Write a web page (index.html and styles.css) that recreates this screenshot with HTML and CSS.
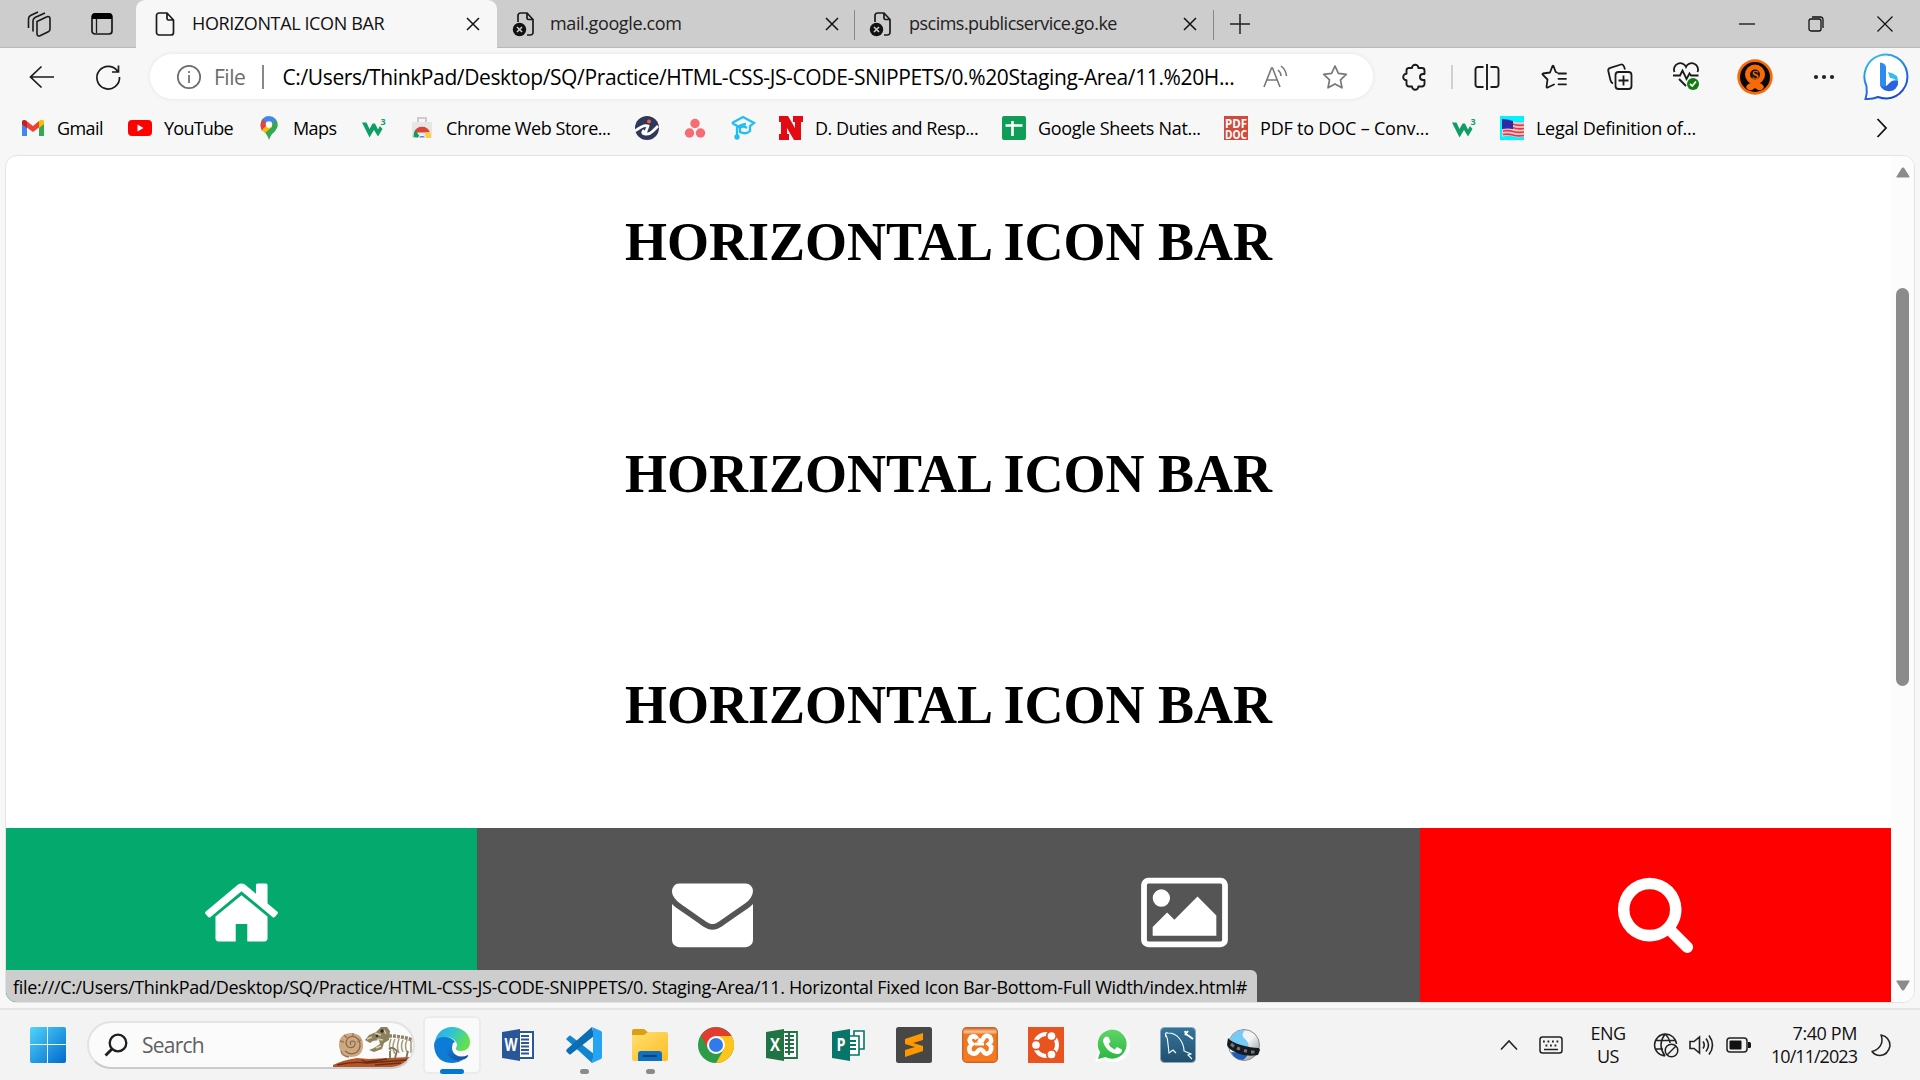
FILE: index.html
```html
<!DOCTYPE html>
<html lang="en">
<head>
<meta charset="utf-8">
<title>HORIZONTAL ICON BAR</title>
<link rel="stylesheet" href="styles.css">
</head>
<body>
<svg class="defs" width="0" height="0" aria-hidden="true">
  <defs>
    <linearGradient id="win" x1="0" y1="0" x2="1" y2="1"><stop offset="0" stop-color="#4fd5fb"/><stop offset="1" stop-color="#0069cd"/></linearGradient>
    <linearGradient id="edgeTop" x1="0" y1="0" x2="1" y2=".4"><stop offset="0" stop-color="#2fa8ee"/><stop offset=".5" stop-color="#2fc4d3"/><stop offset="1" stop-color="#62e14d"/></linearGradient>
    <linearGradient id="edgeLow" x1="0" y1="0" x2="1" y2="1"><stop offset="0" stop-color="#1283e0"/><stop offset="1" stop-color="#0c4a97"/></linearGradient>
    <linearGradient id="bing" x1="0" y1="0" x2=".5" y2="1"><stop offset="0" stop-color="#35c8f3"/><stop offset="1" stop-color="#1c49d6"/></linearGradient>
    <linearGradient id="folder" x1="0" y1="0" x2="1" y2="1"><stop offset="0" stop-color="#ffdf70"/><stop offset="1" stop-color="#fbbd24"/></linearGradient>
    <linearGradient id="xampp" x1="0" y1="0" x2="0" y2="1"><stop offset="0" stop-color="#d9641a"/><stop offset=".12" stop-color="#f8c39a"/><stop offset=".2" stop-color="#ee7420"/><stop offset="1" stop-color="#f97a1f"/></linearGradient>
    <linearGradient id="sql" x1="0" y1="0" x2="0" y2="1"><stop offset="0" stop-color="#35759b"/><stop offset="1" stop-color="#214f6e"/></linearGradient>
    <linearGradient id="wa" x1="0" y1="0" x2="0" y2="1"><stop offset="0" stop-color="#5fd568"/><stop offset="1" stop-color="#2cb742"/></linearGradient>
    <linearGradient id="silver" x1="0" y1="0" x2="1" y2="1"><stop offset="0" stop-color="#e8eef2"/><stop offset=".5" stop-color="#f4f4f4"/><stop offset="1" stop-color="#85898d"/></linearGradient>
    <symbol id="close" viewBox="0 0 14 14"><path d="M1 1l12 12M13 1L1 13" stroke="#111" stroke-width="1.5" fill="none"/></symbol>
    <symbol id="badpage" viewBox="0 0 24 26"><path d="M6 11V4.500a2.500 2.500 0 0 1 2.500-2.500H15l6 6.500V21.500a2.500 2.500 0 0 1-2.500 2.500H15M15 2v5a1.500 1.500 0 0 0 1.500 1.500H21" fill="none" stroke="#1a1a1a" stroke-width="1.700"/><circle cx="7.500" cy="18.500" r="6.700" fill="#111"/><path d="M5 16l5 5m0-5l-5 5" stroke="#ccc" stroke-width="1.600"/></symbol>
    <symbol id="w3" viewBox="0 0 24 24"><path d="M0 6.500h4.500L7.500 13l3-5.500h2.500l3 6 2-3.500 2.500 3-4.500 7.500L12 14l-4.500 7.500z" fill="#109d6a"/><text x="18.500" y="8.500" class="w3-digit">3</text></symbol>
  </defs>
</svg>

<header class="tabs">
  <div class="tabs-tools">
    <svg width="26" height="26" viewBox="0 0 26 26" fill="none" stroke="#1a1a1a" stroke-width="1.600"><path d="M11 10.500l10-4.700a2 2 0 0 1 3 1.700v10.500a3 3 0 0 1-1.700 2.700l-8.300 4a2 2 0 0 1-3-1.700zM7 20.500V10a4 4 0 0 1 2-3.500L19 2M2.500 17V8a4 4 0 0 1 2-3.500L12 1"/></svg>
    <svg width="22" height="24" viewBox="0 0 22 24"><rect x="1" y="2" width="20" height="20" rx="3" fill="none" stroke="#1a1a1a" stroke-width="1.700"/><path d="M1 7V4a3 3 0 0 1 3-3h14a3 3 0 0 1 3 3v3z" fill="#000"/><path d="M5.500 7v14" stroke="#1a1a1a" stroke-width="1.300"/></svg>
  </div>
  <div class="tab active">
    <svg width="20" height="26" viewBox="0 0 20 26" fill="none" stroke="#1a1a1a" stroke-width="1.700"><path d="M4 2h8l6.500 7v12.500A2.500 2.500 0 0 1 16 24H4a2.500 2.500 0 0 1-2.500-2.500v-17A2.500 2.500 0 0 1 4 2zM12 2v5.500A1.500 1.500 0 0 0 13.500 9h5"/></svg>
    <span class="tab-title">HORIZONTAL ICON BAR</span><svg width="14" height="14"><use href="#close"/></svg>
  </div>
  <div class="tab second">
    <svg width="24" height="26"><use href="#badpage"/></svg>
    <span class="tab-title">mail.google.com</span><svg width="14" height="14"><use href="#close"/></svg>
  </div>
  <div class="tab third">
    <svg width="24" height="26"><use href="#badpage"/></svg>
    <span class="tab-title">pscims.publicservice.go.ke</span><svg width="14" height="14"><use href="#close"/></svg>
  </div>
  <svg class="plus" width="22" height="22" viewBox="0 0 22 22"><path d="M11 1v20M1 11h20" stroke="#222" stroke-width="1.500"/></svg>
  <div class="window-buttons">
    <svg width="16" height="16" viewBox="0 0 16 16"><path d="M0 8h16" stroke="#111" stroke-width="1.300"/></svg>
    <svg width="16" height="16" viewBox="0 0 16 16" fill="none" stroke="#111" stroke-width="1.300"><rect x="1" y="3" width="12" height="12" rx="2"/><path d="M4 1h8.500A2.500 2.500 0 0 1 15 3.500V12"/></svg>
    <svg width="16" height="16" viewBox="0 0 16 16"><path d="M.5.500l15 15M15.500.500l-15 15" stroke="#111" stroke-width="1.200"/></svg>
  </div>
</header>

<nav class="toolbar">
  <svg width="26" height="24" viewBox="0 0 26 24" fill="none" stroke="#1a1a1a" stroke-width="1.700"><path d="M25 12H1.500M12.500 1.500L1.500 12l11 10.500"/></svg>
  <svg class="reload" width="26" height="26" viewBox="0 0 26 26" fill="none" stroke="#1a1a1a" stroke-width="1.700"><path d="M23 8A11.300 11.300 0 1 0 24.500 13M23.500 1.500V8H17"/></svg>
  <div class="address">
    <svg width="26" height="26" viewBox="0 0 26 26" fill="none" stroke="#6c6c6c" stroke-width="1.700"><circle cx="13" cy="13" r="11.200"/><path d="M13 11v8M13 7v2"/></svg>
    <span class="scheme">File</span><i class="bar"></i>
    <span class="url">C:/Users/ThinkPad/Desktop/SQ/Practice/HTML-CSS-JS-CODE-SNIPPETS/0.%20Staging-Area/11.%20H...</span>
    <svg class="aloud" width="26" height="24" viewBox="0 0 26 24" fill="none" stroke="#777" stroke-width="1.600"><path d="M1 22L8.500 3h1L17 22M4 15h10M15 5q3 2.500 3 6M18 1q5 4 5.500 10"/></svg>
    <svg class="star" width="26" height="26" viewBox="0 0 26 26" fill="none" stroke="#777" stroke-width="1.700" stroke-linejoin="round"><path d="M13 2l3.400 7.300 7.900 1-5.800 5.500 1.500 8-7-3.900-7 3.900 1.500-8L1.700 10.300l7.900-1z"/></svg>
  </div>
  <svg class="puzzle" width="26" height="28" viewBox="0 0 26 28" fill="none" stroke="#1a1a1a" stroke-width="1.900" stroke-linejoin="round"><path d="M6.500 5H10a3.200 3.200 0 0 1 6.400 0H20a2.500 2.500 0 0 1 2.500 2.500V11H21a3 3 0 0 0 0 6h1.500v4a2.500 2.500 0 0 1-2.500 2.500h-3.600a3.200 3.200 0 0 1-6.400 0H7A2.500 2.500 0 0 1 4.500 21v-3.700a3.300 3.300 0 0 1 0-6.600V7.500A2.500 2.500 0 0 1 6.500 5z"/></svg>
  <i class="sep"></i>
  <svg class="split" width="26" height="28" viewBox="0 0 26 28" fill="none" stroke="#1a1a1a" stroke-width="1.900"><path d="M13 1v26M9.500 4H4.500A2.500 2.500 0 0 0 1.500 6.500v15A2.500 2.500 0 0 0 4.500 24H9.500M16.500 4h5A2.500 2.500 0 0 1 24.500 6.500v15a2.500 2.500 0 0 1-3 2.500H16.500"/></svg>
  <svg class="favs" width="26" height="26" viewBox="0 0 26 26" fill="none" stroke="#1a1a1a" stroke-width="1.800" stroke-linejoin="round" stroke-linecap="round"><path d="M16 8.500l-1.300-.500L12.500 2q-.5-.7-1 0L9 8.500 2 9.500q-1 .5-.3 1.200L6.500 15.500 5.500 23q.3 1 1.200.5L13 20.500M17.500 9.500H25M17.500 14.800H25M17.500 20.300H25"/></svg>
  <svg class="collections" width="26" height="28" viewBox="0 0 26 28" fill="none" stroke="#1a1a1a" stroke-width="1.800"><path d="M6 20.500q-2-1-2.600-3.500L1.300 8q-.5-2.500 2-3.200L14 1.500q2-.5 3 2L18 6.500"/><rect x="8.500" y="9" width="16" height="17" rx="3"/><path d="M16.500 12.500v10M11.500 17.500h10"/></svg>
  <svg class="collections" width="26" height="29" viewBox="0 0 26 29" fill="none" stroke="#1a1a1a" stroke-width="1.800"><path d="M1.500 10A6 6 0 0 1 13 5 6 6 0 0 1 24.500 10M0 13.500h7l2.500-5 4 8.500 3-5.500 1.500 2h7.500M6 17l7 7"/><circle cx="20" cy="22" r="6" fill="#107c10" stroke="none"/><path d="M17 22l2.300 2 3.700-4.500" stroke="#fff"/></svg>
  <svg class="avatar" width="36" height="36" viewBox="0 0 36 36"><circle cx="18" cy="18" r="17.700" fill="#f76b07"/><circle cx="18" cy="18" r="15" fill="#080808"/><path d="M9 28q3-6 9-3 6-3 9 3-2 4-6 3l-3-2-3 2q-4 1-6-3z" fill="#f76b07"/><circle cx="18" cy="15.500" r="10" fill="#f76b07"/><circle cx="18" cy="15.500" r="5" fill="#141414"/><text x="14.900" y="20" class="avatar-letter">S</text></svg>
  <svg class="dots" width="22" height="6" viewBox="0 0 22 6" fill="#222"><circle cx="3" cy="3" r="2.100"/><circle cx="11" cy="3" r="2.100"/><circle cx="19" cy="3" r="2.100"/></svg>
  <svg class="bing" width="48" height="48" viewBox="0 0 48 48"><path d="M2.500 46q2-6 1-13A21.500 22 0 1 1 24 45.500q-5 0-9-1.500-6 2.500-12.500 2z" fill="#fff" stroke="url(#bing)" stroke-width="2"/><path d="M17 9.500q5 .5 6 4V37q-6-1-6-6z" fill="#2f8bf0"/><path d="M25 19q11 2 10 10-4-4-8-4z" fill="#30bdf0"/><path d="M35 28q1 6-5 9.500-9 3-13-6 4 5 9-1 4-5 9-2.500z" fill="#2a63e2"/></svg>
</nav>

<nav class="bookmarks">
  <div class="bm"><svg width="24" height="24" viewBox="0 0 24 24"><path d="M1 5v15h5v-9z" fill="#4285f4"/><path d="M23 5v15h-5v-9z" fill="#34a853"/><path d="M1 5q2-2 4.500 0L12 10l6-5v6.500L12 16 1 8z" fill="#ea4335"/><path d="M18 5q3-2.500 5 0v3l-5 4z" fill="#fbbc04"/><path d="M1 5.500v2.700l5 3.700V5.500q-3-3-5 0z" fill="#c5221f"/></svg><span class="tight">Gmail</span></div>
  <div class="bm"><svg width="24" height="24" viewBox="0 0 24 24"><rect y="4" width="24" height="16" rx="4" fill="#f00"/><path d="M9.500 8.500v7l6-3.500z" fill="#fff"/></svg><span class="tighter">YouTube</span></div>
  <div class="bm"><svg width="24" height="24" viewBox="0 0 24 24"><path d="M12 0a8.500 8.500 0 0 0-8.500 8.500q0 4 4.500 8L18.500 3A8.500 8.500 0 0 0 12 0z" fill="#4285f4"/><path d="M5.500 3L12 8.500 5 15Q2 9 5.500 3z" fill="#ea4335"/><path d="M18.500 3Q22 7 20 12q-2 4-5 6-2 3-3 6-1-4-4-7.500z" fill="#34a853"/><path d="M5 14l5-5 5 2-7 6z" fill="#fbbc04"/><path d="M8 2l11 1-5 6-6-1z" fill="#4285f4"/><circle cx="12" cy="8.500" r="3.200" fill="#fff"/></svg><span class="tight">Maps</span></div>
  <div class="bm"><svg width="24" height="24"><use href="#w3"/></svg></div>
  <div class="bm"><svg width="24" height="24" viewBox="0 0 24 24"><path d="M8 6V2h8v4" fill="none" stroke="#ccc" stroke-width="2"/><path d="M2 6h20v16H2z" fill="#e6e6e6"/><path d="M4 16.500a8.500 8.500 0 0 1 16 0h-8z" fill="#db4437"/><path d="M3.500 21q-.5-4 2-7l5 8z" fill="#0f9d58"/><path d="M14 22l2-6h4q2 3 .5 6z" fill="#ffcd40"/><path d="M8 22a4.300 4.300 0 0 1 8 0z" fill="#4285f4" stroke="#fff"/></svg><span class="medium">Chrome Web Store...</span></div>
  <div class="bm"><svg width="24" height="24" viewBox="0 0 24 24"><circle cx="12" cy="12" r="12" fill="#2f3858"/><path d="M0 15q9-7 13-5l-3 8q4 1 8-3l5-5M10 18q-4 0-1-4" fill="none" stroke="#fff" stroke-width="2.800"/><circle cx="14" cy="5.500" r="2" fill="#f35f42"/></svg></div>
  <div class="bm"><svg width="24" height="24" viewBox="0 0 24 24" fill="#f76c72"><circle cx="12" cy="7.500" r="4.700"/><circle cx="6.500" cy="17" r="4.700"/><circle cx="17.500" cy="17" r="4.700"/></svg></div>
  <div class="bm"><svg width="24" height="24" viewBox="0 0 24 24" fill="none" stroke="#22bdf2" stroke-width="2.300"><path d="M1 7l11-6 11 6-4 3v5q-4 4-10 1v-4q3-3 7 0M1 7l7 4M6 23V12q2-3 9-4"/><circle cx="6" cy="21" r="1.500"/></svg></div>
  <div class="bm"><svg width="24" height="24" viewBox="0 0 24 24" fill="#e30b13"><path d="M0 0h9l7 12V6h-2V0h10v6h-2v18h-7L8 12v6h2v6H0v-6h2V6H0z"/></svg><span class="medium">D. Duties and Resp...</span></div>
  <div class="bm"><svg width="24" height="24" viewBox="0 0 24 24"><rect width="24" height="24" rx="2" fill="#0f9d58"/><path d="M10.500 5v15M3.500 9.500h17" stroke="#fff" stroke-width="2.600"/></svg><span class="loose">Google Sheets Nat...</span></div>
  <div class="bm"><svg width="24" height="24" viewBox="0 0 24 24"><path fill="#d24a3c" d="M0 0h24v24H0z"/><text x="1" y="11.500" textLength="22" lengthAdjust="spacingAndGlyphs" class="pdf">PDF</text><text x="1" y="22.500" textLength="22" lengthAdjust="spacingAndGlyphs" class="pdf">DOC</text></svg><span class="loosest">PDF to DOC – Conv...</span></div>
  <div class="bm"><svg width="24" height="24"><use href="#w3"/></svg></div>
  <div class="bm"><svg width="24" height="24" viewBox="0 0 24 24"><path fill="#00f4ff" d="M0 0h24v24H0z"/><path d="M2 3q5 0 10 2t12 1v15q-6 1-11-.5T2 21z" fill="#f4c3c7"/><path d="M12 8q6 2 12 1M12 11.500q6 2 12 1M3 15q5-1 10 .5t11 .5M3 18.500q5-1 10 .5t11 .5" stroke="#df3946" stroke-width="1.700" fill="none"/><path d="M2 3q6 0 11 2v8q-5-1-11 0z" fill="#2a2ba8"/></svg><span class="loose">Legal Definition of...</span></div>
  <svg class="more" width="12" height="20" viewBox="0 0 12 20" fill="none" stroke="#111" stroke-width="1.800"><path d="M1.500 1l8.500 9-8.500 9"/></svg>
</nav>

<main class="viewport">
  <div class="page">
    <section class="headings"><h1>HORIZONTAL ICON BAR</h1><h1>HORIZONTAL ICON BAR</h1><h1>HORIZONTAL ICON BAR</h1></section>
    <div class="icon-bar">
      <a class="home"><svg width="81" height="81" viewBox="0 0 1792 1792"><path d="M1472 992v480q0 26-19 45t-45 19h-384v-384h-256v384h-384q-26 0-45-19t-19-45v-480q0-1 .5-3t.5-3l575-474 575 474q1 2 1 6zm223-69l-62 74q-8 9-21 11h-3q-13 0-21-7l-692-577-692 577q-12 8-24 7-13-2-21-11l-62-74q-8-10-7-23.500t11-21.500l719-599q32-26 76-26t76 26l244 204v-195q0-14 9-23t23-9h192q14 0 23 9t9 23v408l219 182q10 8 11 21.500t-7 23.500z"/></svg></a>
      <a><svg width="81" height="81" viewBox="0 0 1792 1792"><path d="M1792 710v794q0 66-47 113t-113 47h-1472q-66 0-113-47t-47-113v-794q44 49 101 87 362 246 497 345 57 42 92.500 65.500t94.500 48 110 24.500h2q51 0 110-24.500t94.500-48 92.500-65.500q170-123 498-345 57-39 100-87zm0-294q0 79-49 151t-122 123q-376 261-468 325-10 7-42.500 31t-54 38.500-52 32.500-57.500 27-50 9h-2q-23 0-50-9t-57.500-27-52-32.500-54-38.500-42.500-31q-91-64-262-182.500t-205-142.500q-62-42-117-115.500t-55-136.500q0-78 41.500-130t118.500-52h1472q65 0 112.500 47t47.500 113z"/></svg></a>
      <a><svg width="87" height="81" viewBox="0 0 1920 1792"><path d="M640 576a192 192 0 1 1-384 0 192 192 0 0 1 384 0zM1664 960v448H256v-192l320-320 160 160 512-512zm96-704H160q-13 0-22.500 9.500T128 288v1216q0 13 9.500 22.500t22.500 9.500h1600q13 0 22.500-9.500t9.500-22.500V288q0-13-9.500-22.500T1760 256zm160 32v1216q0 66-47 113t-113 47H160q-66 0-113-47T0 1504V288q0-66 47-113t113-47h1600q66 0 113 47t47 113z"/></svg></a>
      <a class="find"><svg width="81" height="81" viewBox="0 0 1792 1792"><path d="M1216 832q0-185-131.500-316.500t-316.500-131.500-316.500 131.500-131.500 316.500 131.500 316.500 316.500 131.500 316.500-131.500 131.500-316.500zm512 832q0 52-38 90t-90 38q-54 0-90-38l-343-342q-179 124-399 124-143 0-273.500-55.500t-225-150-150-225-55.500-273.500 55.500-273.500 150-225 225-150 273.500-55.500 273.500 55.500 225 150 150 225 55.500 273.500q0 220-124 399l343 343q37 37 37 90z"/></svg></a>
    </div>
  </div>
  <div class="scrollbar">
    <svg width="14" height="11" viewBox="0 0 14 11"><path d="M7 .5q1 0 1.500 1l5 8q.5 1-.5 1H1q-1 0-.5-1l5-8q.5-1 1.500-1z" fill="#8b8b8b"/></svg>
    <i class="thumb"></i>
    <svg width="14" height="11" viewBox="0 0 14 11"><path d="M7 10.500q1 0 1.500-1l5-8q.5-1-.5-1H1q-1 0-.5 1l5 8q.5 1 1.500 1z" fill="#8b8b8b"/></svg>
  </div>
  <div class="status"><span>file:///C:/Users/ThinkPad/Desktop/SQ/Practice/HTML-CSS-JS-CODE-SNIPPETS/0. Staging-Area/11. Horizontal Fixed Icon Bar-Bottom-Full Width/index.html#</span></div>
</main>

<footer class="taskbar">
  <svg width="36" height="36" viewBox="0 0 36 36" fill="url(#win)"><path d="M2 0h15v17H0V2a2 2 0 0 1 2-2zM18 0h16a2 2 0 0 1 2 2v15H18zM0 18h17v18H2a2 2 0 0 1-2-2zM18 18h18v16a2 2 0 0 1-2 2H18z"/></svg>
  <div class="search">
    <svg width="24" height="24" viewBox="0 0 24 24" fill="none" stroke="#1e1e1e" stroke-width="2.300"><circle cx="14" cy="10" r="8.300"/><path d="M8 16l-6.500 6.500" stroke-width="2.800"/></svg>
    <span class="search-text">Search</span>
    <svg class="fossils" width="82" height="44" viewBox="0 0 82 44">
      <path d="M2 42q10-5 24-7l12 1 40-2 4 2-6 8H2z" fill="#b4552a"/><path d="M6 42q16-4 30-2l40-3M30 37l6 2 20-3M44 42l26-2" stroke="#6e2c14" stroke-width="1.300" fill="none"/>
      <path d="M8 22q0-12 13-12 11 1 11 12 0 12-12 12-12-2-12-12z" fill="#cda982"/><path d="M20 22q-2-3 1-4 4 0 3 4-2 4-7 2-4-4 0-9 6-4 11 2 3 7-2 12-6 4-12-1" fill="none" stroke="#8b6645" stroke-width="1.200"/><path d="M10 28q1 5 8 6M9 18l4 1M13 12l3 3M22 10v4M30 17l-4 2" stroke="#9b7350" stroke-width="1.300" fill="none"/>
      <path d="M34 17l4-5 7-3 5-5h6l3 4-1 9-5 3-2 6-8 3-5-2 5-2 6-4-1-4-6 1-3 2z" fill="#8b8160"/><path d="M36 16l5-2m3-4l6 2m3-5l2 4m-9 5l6 1m-7 8l5-2" stroke="#d6cda3" stroke-width="1.500"/><circle cx="51" cy="8" r="1.700" fill="#2f2c1e"/><circle cx="46" cy="13" r="1.300" fill="#3a3626"/>
      <path d="M58 13q12 0 24 4" stroke="#8f8564" stroke-width="3.500" stroke-dasharray="3 1" fill="none"/><path d="M60 16q-3 8 0 12m4-12q-4 8 0 15m4-15q-3 8 0 14m4-13q-3 6 0 12m4-12q-3 6 0 12m4-11v12" stroke="#a39a78" stroke-width="1.500" fill="none"/><path d="M58 26q4-3 8 2l-2 7M59 28v9M77 28l-2 8" stroke="#7c7252" stroke-width="1.800" fill="none"/>
    </svg>
  </div>
  <div class="apps">
    <div class="app current"><svg width="36" height="36" viewBox="0 0 36 36"><path d="M1 16A17 17 0 0 1 18 0c10 0 18 7 18 15 0 6-4 9-9 9-4 0-6-1.500-5-3q2-3 0-6Q17 8 8 12q-5 2-7 6z" fill="url(#edgeTop)"/><path d="M0 18q1-8 10-8 8 0 11 5l-2 1q-8 3-4 11 5 7 14 6-5 3-10 3Q1 36 0 18z" fill="#0d7cd7"/><path d="M14 18q-4 12 7 15 5 1 10-1 4-3 3-4-7 3-12 0-6-4-3-12-3 0-5 2z" fill="url(#edgeLow)"/></svg></div>
    <div class="app"><svg width="34" height="34" viewBox="0 0 34 34"><path d="M15 4h17v26H15z" fill="#fff" stroke="#2b579a" stroke-width="2"/><path d="M20 8h8M20 11.500h8M20 15h8M20 18.500h8M20 22h8M20 25.500h8" stroke="#2b579a" stroke-width="1.800"/><path d="M1 4l18-3v32L1 30z" fill="#2a5699"/><text x="3.500" y="22.500" textLength="13" lengthAdjust="spacingAndGlyphs" class="office">W</text></svg></div>
    <div class="app open"><svg width="36" height="36" viewBox="0 0 36 36"><path d="M0 12l3-3q1-1 2 0l23 18-2 9L1 13z" fill="#1385ce"/><path d="M0 24l3 3q1 1 2 0L28 9 26 0 1 22z" fill="#0b6db3"/><path d="M26 0l9 4q1 .5 1 2v24q0 1-1 2l-9 4q-1-1 1-3V3z" fill="#27a3f5"/></svg></div>
    <div class="app open"><svg width="36" height="36" viewBox="0 0 36 36"><path d="M2 2h10l5 4v4H0V4q0-2 2-2z" fill="#dba012"/><path d="M0 8h12l4-3h18q2 0 2 2v25q0 2-2 2H2q-2 0-2-2z" fill="url(#folder)"/><path d="M6 34v-7q0-3 3-3h18q3 0 3 3v7z" fill="#0f70c0"/><path d="M11 29h14" stroke="#07427c" stroke-width="2"/></svg></div>
    <div class="app"><svg width="36" height="36" viewBox="0 0 36 36"><circle cx="18" cy="18" r="18" fill="#2d9b49"/><path d="M3 8.500A18 18 0 0 1 33.600 9H18l-7.800 13.500z" fill="#e33b2e"/><path d="M33.600 9A18 18 0 0 1 18 36l8-14-8-13z" fill="#fdc51b"/><circle cx="18" cy="18" r="9" fill="#fff"/><circle cx="18" cy="18" r="7" fill="#2f7bea"/></svg></div>
    <div class="app"><svg width="34" height="34" viewBox="0 0 34 34"><path d="M15 4h17v26H15z" fill="#fff" stroke="#217346" stroke-width="1.800"/><path d="M20 8h9M20 12h9M20 16h9M20 20h9M20 24h9M24 5v22" stroke="#217346" stroke-width="2"/><path d="M1 4l18-3v32L1 30z" fill="#217346"/><text x="5" y="22.500" textLength="10" lengthAdjust="spacingAndGlyphs" class="office">X</text></svg></div>
    <div class="app"><svg width="34" height="34" viewBox="0 0 34 34"><path d="M23 3h10v18H23z" fill="#fff" stroke="#077568" stroke-width="1.600"/><path d="M17 8h11v19H17z" fill="#fff" stroke="#077568" stroke-width="1.600"/><path d="M18 13h7M18 17h7M18 21h7" stroke="#077568" stroke-width="1.800"/><path d="M1 4l18-3v32L1 30z" fill="#077568"/><text x="5.500" y="22.500" textLength="9" lengthAdjust="spacingAndGlyphs" class="office">P</text></svg></div>
    <div class="app"><svg width="36" height="36" viewBox="0 0 36 36"><rect width="36" height="36" rx="2.500" fill="#474747"/><path d="M9 12l18-6v7l-10 3 10 3v5L9 30v-7l10-3-10-3z" fill="#ff9800"/></svg></div>
    <div class="app"><svg width="36" height="36" viewBox="0 0 36 36"><rect x=".7" y=".7" width="34.600" height="34.600" rx="4" fill="url(#xampp)" stroke="#c4692a" stroke-width="1.400"/><path d="M15 12q-2-4-6-2-3 4 1 7-4 3-2 8 5 4 8-1 2-3 5 0 3 5 7 1 3-5-1-8 4-3 1-7-5-3-7 2-1 3-5 1" fill="none" stroke="#fff" stroke-width="4.500"/><path d="M13 17h9" stroke="#fff" stroke-width="3"/></svg></div>
    <div class="app"><svg width="36" height="36" viewBox="0 0 36 36"><path d="M0 0h36v36H0z" fill="#e9531f"/><circle cx="18" cy="18" r="11" fill="none" stroke="#fff" stroke-width="4"/><g fill="#fff" stroke="#e9531f" stroke-width="1.700"><circle cx="8" cy="18" r="4.700"/><circle cx="23.500" cy="9" r="4.700"/><circle cx="23.500" cy="27.500" r="4.700"/></g></svg></div>
    <div class="app"><svg width="36" height="36" viewBox="0 0 36 36"><path d="M1 35l3-10a16.500 16.500 0 1 1 7 8z" fill="#fff"/><path d="M4 32l2-7a14.500 14.500 0 1 1 5.500 5z" fill="url(#wa)"/><path d="M12 9.500l2.500.5 2 4.500-2 2.500q2 4 6 5.500l2.500-2.500 5 2.500q0 4.500-5 4.500-11-1.500-14-12.500 0-3.500 3-5z" fill="#fff"/></svg></div>
    <div class="app"><svg width="36" height="36" viewBox="0 0 36 36"><rect x=".5" y=".5" width="35" height="35" rx="4" fill="url(#sql)" stroke="#86a9be"/><path d="M6 10q-2-5 2-4 7 0 11 5 5 6 5 13l7 3-3 1 4 4M6 8q2 4 2 9l1 9 4-3 3 3" fill="none" stroke="#fff" stroke-width="1.100"/><path d="M25 4l1 3 3 2 4 3M25 8l3-4" stroke="#fff" stroke-width="2"/></svg></div>
    <div class="app"><svg width="34" height="34" viewBox="0 0 34 34"><circle cx="17" cy="17" r="15.500" fill="url(#silver)" stroke="#8b8e91"/><path d="M3 11Q8 1 18 2q-5 5 0 9 5 4 3 10L3 16z" fill="#75caf6"/><path d="M4 24q8 1 16-1 2 5-4 9-8 0-12-8z" fill="#1d5bbd"/><path d="M1 10q3 4 13 7t18 3l1 2-2 5q-12 2-21-2T0 17z" fill="#191919"/><path d="M4 16l3 2.500M10 20l3 1.200M17 22.500l3 .7M24 24h3.500" stroke="#66788a" stroke-width="3"/></svg></div>
  </div>
  <div class="tray">
    <svg width="18" height="12" viewBox="0 0 18 12" fill="none" stroke="#222" stroke-width="1.600"><path d="M1 10.500l8-8.500 8 8.500"/></svg>
    <svg class="keys" width="24" height="18" viewBox="0 0 24 18" fill="none" stroke="#222" stroke-width="1.500"><rect x="1" y="1" width="22" height="16" rx="2.500"/><path d="M4 5.500h16M6.500 9.500h12" stroke-dasharray="1.800 2.700" stroke-width="2"/><path d="M5 13.500h14"/></svg>
    <div class="lang"><span>ENG</span><span>US</span></div>
    <svg class="net" width="26" height="26" viewBox="0 0 26 26" fill="none" stroke="#222" stroke-width="1.500"><path d="M12 24A11 11 0 1 1 23.500 12M12 24Q4 13 12 2q5 5 5 9M2 8.500h20M2 17h8"/><circle cx="18.500" cy="18.500" r="6.300"/><path d="M14 23l9-9"/></svg>
    <svg class="vol" width="25" height="22" viewBox="0 0 25 22" fill="none" stroke="#222" stroke-width="1.600"><path d="M1 7.500h4L10.500 3v16L5 14.500H1zM14 7.500q2.500 3.500 0 7M17 4.500q5 6.500 0 13M20 1.500q7 9.500 0 19"/></svg>
    <svg class="bat" width="25" height="16" viewBox="0 0 25 16"><rect x="1" y="1" width="20" height="14" rx="3" fill="none" stroke="#222" stroke-width="1.500"/><rect x="3.500" y="3.500" width="12" height="9" rx="1" fill="#111"/><path d="M22 5h1.500q1.500 0 1.500 1.500v3q0 1.500-1.500 1.500H22z" fill="#111"/></svg>
    <div class="clock"><span>7:40 PM</span><span class="date">10/11/2023</span></div>
    <svg class="moon" width="20" height="24" viewBox="0 0 20 24" fill="none" stroke="#222" stroke-width="1.500" stroke-linejoin="round"><path d="M10 2q9 2 9 11-2 9-10 9.500-5 0-8-4 7-2 9-7 2-4 0-9.500z"/></svg>
  </div>
</footer>
</body>
</html>
```
FILE: styles.css
```css
* { box-sizing: border-box; }
body { margin: 0; width: 1920px; height: 1080px; overflow: hidden; background: #f7f7f7; color: #000; font-family: "Open Sans", "Noto Sans", sans-serif; font-size: 18px; display: flex; flex-direction: column; }
svg { display: block; flex: none; overflow: visible; }
.defs { position: absolute; }
span { white-space: nowrap; }

.tabs { height: 48px; flex: none; display: flex; align-items: center; background: #cdcdcd; box-shadow: inset 0 -1px #b9b9b9; }
.tabs-tools { width: 136px; display: flex; padding-left: 26px; gap: 39px; align-items: center; }
.tab { height: 48px; display: flex; align-items: center; position: relative; color: #222; }
.tab-title { flex: 1; padding-bottom: 2px; letter-spacing: -0.38px; }
.active { width: 361px; padding: 0 17px 0 19px; background: #f7f7f7; border-radius: 9px 9px 0 0; color: #111; }
.active .tab-title { padding-left: 17px; }
.second { width: 358px; padding: 0 16px 0 15px; }
.third { width: 359px; padding: 0 17px 0 14px; }
.second .tab-title { padding-left: 14px; }
.third .tab-title { padding-left: 16px; letter-spacing: -0.52px; }
.second::after, .third::after { content: ""; position: absolute; right: 0; top: 10px; width: 1px; height: 30px; background: #888; }
.plus { margin-left: 15px; }
.window-buttons { margin-left: auto; display: flex; gap: 53px; padding-right: 27px; }

.toolbar { height: 58px; flex: none; display: flex; align-items: center; padding: 0 9px 1px 29px; }
.reload { margin-left: 40px; }
.address { width: 1223px; height: 45px; flex: none; margin-left: 29px; border-radius: 23px; background: #fff; display: flex; align-items: center; padding-left: 26px; box-shadow: 0 0 4px #e4e4e4; font-size: 21px; }
.scheme { color: #6c6c6c; width: 49px; padding-left: 12px; letter-spacing: -0.5px; flex: none; }
.bar { width: 1.5px; height: 24px; background: #888; margin-left: 11px; flex: none; }
.url { width: 961px; margin-left: 19px; flex: none; letter-spacing: -0.37px; }
.aloud { margin-left: 19px; }
.star { margin-left: 33px; }
.puzzle { margin-left: 29px; }
.sep { width: 2px; height: 24px; background: #d0d0d0; margin-left: 23px; }
.split { margin-left: 21px; }
.favs { margin-left: 41px; }
.collections { margin-left: 40px; }
.avatar { margin-left: 38px; }
.dots { margin-left: 40px; }
.bing { margin-left: 28px; }
.avatar-letter { font: bold 12px "Liberation Serif", serif; fill: #f76b07; }

.bookmarks { height: 46px; flex: none; display: grid; grid-template-columns: 107px 129px 105px 48px 225px 48px 48px 48px 223px 222px 228px 48px 222px 1fr; align-items: center; padding: 0 32px 2px 21px; }
.bm { display: flex; align-items: center; gap: 12px; }
.tight { letter-spacing: -0.6px; }
.tighter { letter-spacing: -0.75px; }
.medium { letter-spacing: -0.45px; }
.loose { letter-spacing: -0.3px; }
.loosest { letter-spacing: -0.2px; }
.more { justify-self: end; }
.w3-digit { font: bold 9px "Open Sans", sans-serif; fill: #109d6a; }
.pdf { font: bold 12px "Open Sans", sans-serif; fill: #fff; }

.viewport { position: relative; width: 1910px; height: 848px; flex: none; margin: 3px 0 0 5px; border: 1px solid #e3e3e3; border-radius: 12px; background: #fff; display: flex; overflow: hidden; }
.page { width: 1885px; display: flex; flex-direction: column; }
.headings { flex: 1; display: flex; flex-direction: column; align-items: center; gap: 169.5px; padding-top: 55px; }
h1 { margin: 0; font: bold 54px/62px "Liberation Serif", serif; }
.icon-bar { height: 174px; display: flex; background: #555; }
.icon-bar a { flex: 1; display: flex; justify-content: center; padding-top: 44px; }
.icon-bar svg { fill: #fff; }
.icon-bar .home { background: #04aa6d; }
.icon-bar .find { background: #f00; }
.scrollbar { flex: 1; background: #fcfcfc; display: flex; flex-direction: column; align-items: center; padding: 11px 0; }
.thumb { width: 13px; height: 398px; margin: 110px 0 auto; border-radius: 7px; background: #8b8b8b; }
.status { position: absolute; left: -1px; bottom: -1px; width: 1252px; height: 33px; background: #cdcdcd; border-radius: 0 6px 0 12px; display: flex; align-items: center; padding-left: 8px; letter-spacing: -0.325px; }

.taskbar { height: 72px; margin-top: auto; flex: none; display: flex; align-items: center; background: #f3f3f3; border-top: 2px solid #e5e5e5; padding-left: 30px; }
.search { width: 328px; height: 48px; margin-left: 21px; border: 2px solid #e3e3e3; border-bottom-color: #cbcbcb; border-radius: 24px; background: #fbfbfb; display: flex; align-items: center; overflow: hidden; padding-left: 15px; }
.search-text { font-size: 21px; color: #606060; margin-left: 14px; letter-spacing: -0.75px; }
.fossils { margin-left: auto; }
.apps { display: flex; margin-left: 4px; }
.app { width: 66px; height: 58px; display: flex; align-items: center; justify-content: center; position: relative; }
.current::before { content: ""; position: absolute; inset: 0 4px; background: #fafafa; border: 2px solid #ebebeb; border-radius: 6px; }
.current svg { position: relative; }
.current::after, .open::after { content: ""; position: absolute; bottom: 0; width: 9px; height: 5px; border-radius: 3px; background: #8a8a8a; }
.current::after { width: 24px; background: #0078d4; }
.office { font: bold 17px "Open Sans", sans-serif; fill: #fff; }
.tray { margin-left: auto; display: flex; align-items: center; padding-right: 29px; color: #111; }
.keys { margin-left: 21px; }
.lang { width: 36px; margin-left: 27px; display: flex; flex-direction: column; align-items: center; line-height: 23px; letter-spacing: -0.5px; }
.net { margin-left: 27px; }
.vol { margin-left: 10px; }
.bat { margin-left: 12px; }
.clock { width: 106px; display: flex; flex-direction: column; align-items: flex-end; line-height: 23px; letter-spacing: -0.4px; }
.date { letter-spacing: -0.95px; }
.moon { margin-left: 14px; }
```
